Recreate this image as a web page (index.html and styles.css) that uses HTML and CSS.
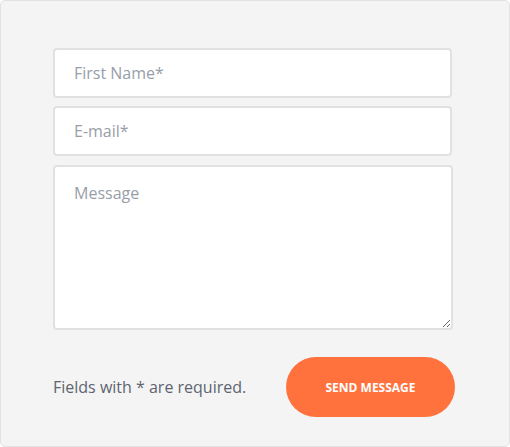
FILE: index.html
```html
<!DOCTYPE html>
<html>
<head>
<meta charset="utf-8">
<link rel="stylesheet" href="styles.css">
</head>
<body>
<div class="card">
  <form class="form">
    <input class="field" type="text" placeholder="First Name*">
    <input class="field" type="text" placeholder="E-mail*">
    <textarea class="field area" placeholder="Message"></textarea>
    <div class="footer">
      <span class="note">Fields with * are required.</span>
      <button class="send" type="button">SEND MESSAGE</button>
    </div>
  </form>
</div>
</body>
</html>
```
FILE: styles.css
```css
html, body {
  margin: 0;
  padding: 0;
  background: #ffffff;
}
.card {
  box-sizing: border-box;
  width: 510px;
  height: 447px;
  background: #f4f4f4;
  border: 1px solid #e2e2e2;
  border-radius: 5px;
  padding: 47px 0 0 52px;
  font-family: "Open Sans", sans-serif;
}
.form {
  display: flex;
  flex-direction: column;
  width: 402px;
}
.field {
  box-sizing: border-box;
  width: 399px;
  height: 50px;
  margin: 0 0 8px 0;
  border: 2px solid #e1e1e1;
  border-radius: 4px;
  background: #ffffff;
  padding: 0 19px;
  font-family: "Open Sans", sans-serif;
  font-size: 16px;
  color: #555;
  outline: none;
}
.field::placeholder {
  color: #979ea8;
}
.area {
  width: 400px;
  height: 165px;
  margin-top: 1px;
  padding: 15px 19px;
  resize: vertical;
  display: block;
}
.footer {
  display: flex;
  align-items: center;
  justify-content: space-between;
  margin-top: 19px;
  width: 402px;
}
.note {
  font-size: 16px;
  color: #5d6470;
}
.send {
  width: 169px;
  height: 60px;
  border: none;
  border-radius: 30px;
  background: #ff723d;
  color: #ffffff;
  font-family: "Open Sans", sans-serif;
  font-weight: 700;
  font-size: 12px;
  letter-spacing: 0;
  padding: 0;
}
```
